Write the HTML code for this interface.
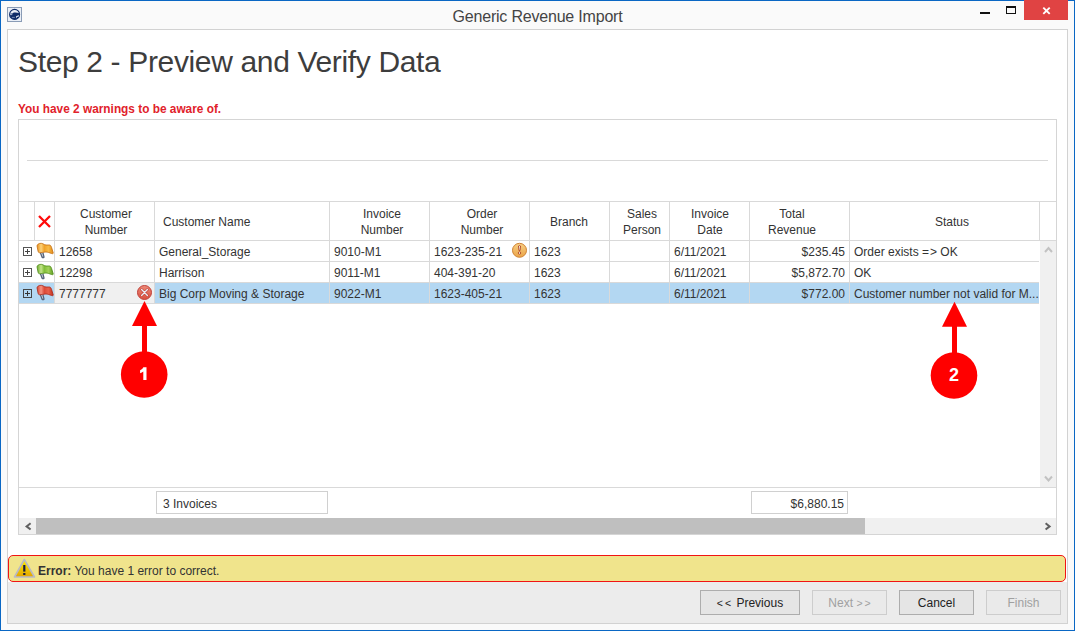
<!DOCTYPE html>
<html><head><meta charset="utf-8">
<style>
*{box-sizing:border-box;margin:0;padding:0}
html,body{width:1075px;height:631px;overflow:hidden;background:#fafafa}
body{position:relative;font-family:"Liberation Sans",sans-serif;color:#333;font-size:12px}
.a{position:absolute}
#win{left:0;top:0;width:1075px;height:631px;border:1px solid #0a67c4;background:#fafafa}
#title{left:0;top:7px;width:1075px;text-align:center;font-size:16px;letter-spacing:-0.2px;color:#444;line-height:20px}
#close{left:1024px;top:0;width:44px;height:20px;background:#e04343}
#panel{left:7px;top:29px;width:1061px;height:595px;border:1px solid #d2d2d2;background:#fff}
#graybot{left:8px;top:582px;width:1059px;height:41px;background:#ececec}
#h1{left:18px;top:44px;font-size:30px;letter-spacing:-0.35px;line-height:36px;color:#3d3d3d;white-space:nowrap}
#warn{left:18px;top:101px;font-size:11.85px;font-weight:700;color:#e1222b;line-height:16px;white-space:nowrap}
#grid{left:18px;top:119px;width:1039px;height:416px;border:1px solid #d5d5d5;background:#fff}
.hl{height:1px;background:#d9d9d9}
.vl{width:1px;background:#d9d9d9}
.hd{text-align:center;line-height:15.5px;white-space:nowrap}
.c{white-space:nowrap;line-height:20px}
.tb{border:1px solid #d0d0d0;background:#fff;height:23px;line-height:21px}
.btn{top:590px;height:25px;border:1px solid #adadad;background:#e5e5e5;text-align:center;line-height:23px;padding-top:1px;color:#222}
.btn.dis{border-color:#cdcdcd;background:#eaeaea;color:#a0a0a0}
</style></head><body>
<div id="win" class="a"></div>
<!-- app icon -->
<svg class="a" style="left:7px;top:7px" width="15" height="15" viewBox="0 0 15 15"><rect x="0.5" y="0.5" width="14" height="14" fill="#e9eef6" stroke="#8a9cb6" stroke-width="1"/><circle cx="7.6" cy="7.4" r="5" fill="none" stroke="#0e2b68" stroke-width="1.1"/><path d="M2.7 7.6 Q3.8 6.1 5.4 6.6 L6.8 5.6 Q9.6 5.2 12.4 6.3 L12.3 8 Q10 8.6 9 9.6 Q8.5 11 10 11.3 L9.6 12.2 Q8.6 12.5 7.6 12.5 Q3.4 12.3 2.7 7.6 Z" fill="#0e2b68"/><rect x="3" y="7.2" width="2.3" height="0.9" fill="#b9c6de"/><path d="M4.9 10.4 H7.8" stroke="#8fa2c6" stroke-width="0.8"/><circle cx="10.4" cy="10.6" r="0.8" fill="#0e2b68"/></svg>
<div id="title" class="a">Generic Revenue Import</div>
<!-- min / max / close -->
<div class="a" style="left:980px;top:12px;width:10px;height:2px;background:#111"></div>
<div class="a" style="left:1006px;top:6px;width:10px;height:8px;border:1px solid #111;border-top-width:2px"></div>
<div id="close" class="a"></div>
<svg class="a" style="left:1042px;top:6px" width="9" height="9" viewBox="0 0 9 9"><path d="M1.3 1.6 L7.7 7.9 M7.7 1.6 L1.3 7.9" stroke="#fff" stroke-width="1.9"/></svg>

<div id="panel" class="a"></div>
<div id="graybot" class="a"></div>

<div id="h1" class="a">Step 2 - Preview and Verify Data</div>
<div id="warn" class="a">You have 2 warnings to be aware of.</div>

<div id="grid" class="a"></div>

<!-- grid lines -->
<div class="a" style="left:19px;top:283px;width:1020px;height:20px;background:#b3d7f2"></div>
<div class="a" style="left:55px;top:283px;width:99px;height:20px;background:#f0f0f0"></div>
<div class="a hl" style="left:27px;top:160px;width:1021px"></div>
<div class="a hl" style="left:19px;top:201px;width:1037px"></div>
<div class="a hl" style="left:19px;top:240px;width:1037px"></div>
<div class="a vl" style="left:34px;top:202px;height:38px"></div>
<div class="a vl" style="left:54px;top:202px;height:101px"></div>
<div class="a vl" style="left:154px;top:202px;height:101px"></div>
<div class="a vl" style="left:329px;top:202px;height:101px"></div>
<div class="a vl" style="left:429px;top:202px;height:101px"></div>
<div class="a vl" style="left:529px;top:202px;height:101px"></div>
<div class="a vl" style="left:609px;top:202px;height:101px"></div>
<div class="a vl" style="left:669px;top:202px;height:101px"></div>
<div class="a vl" style="left:749px;top:202px;height:101px"></div>
<div class="a vl" style="left:849px;top:202px;height:101px"></div>
<div class="a vl" style="left:1039px;top:202px;height:38px"></div>
<div class="a hl" style="left:19px;top:261px;width:1020px"></div>
<div class="a hl" style="left:19px;top:282px;width:1020px"></div>
<div class="a hl" style="left:19px;top:303px;width:1020px"></div>
<div class="a hl" style="left:19px;top:487px;width:1037px"></div>
<!-- header text -->
<svg class="a" style="left:38px;top:215px" width="13" height="13" viewBox="0 0 13 13"><path d="M1 1 L12 12 M12 1 L1 12" stroke="#ff0a0a" stroke-width="2.3"/></svg>
<div class="a hd" style="left:46px;top:207px;width:120px">Customer<br>Number</div>
<div class="a hd" style="left:163px;top:215px;text-align:left">Customer Name</div>
<div class="a hd" style="left:322px;top:207px;width:120px">Invoice<br>Number</div>
<div class="a hd" style="left:422px;top:207px;width:120px">Order<br>Number</div>
<div class="a hd" style="left:509px;top:215px;width:120px">Branch</div>
<div class="a hd" style="left:582px;top:207px;width:120px">Sales<br>Person</div>
<div class="a hd" style="left:650px;top:207px;width:120px">Invoice<br>Date</div>
<div class="a hd" style="left:732px;top:207px;width:120px">Total<br>Revenue</div>
<div class="a hd" style="left:892px;top:215px;width:120px">Status</div>
<!-- rows -->
<div class="a c" style="left:59px;top:242px">12658</div>
<div class="a c" style="left:159px;top:242px">General_Storage</div>
<div class="a c" style="left:334px;top:242px">9010-M1</div>
<div class="a c" style="left:434px;top:242px">1623-235-21</div>
<div class="a c" style="left:534px;top:242px">1623</div>
<div class="a c" style="left:674px;top:242px">6/11/2021</div>
<div class="a c" style="left:745px;top:242px;width:100px;text-align:right">$235.45</div>
<div class="a c" style="left:854px;top:242px">Order exists <span style="letter-spacing:1px">=</span>&gt; OK</div>

<div class="a c" style="left:59px;top:263px">12298</div>
<div class="a c" style="left:159px;top:263px">Harrison</div>
<div class="a c" style="left:334px;top:263px">9011-M1</div>
<div class="a c" style="left:434px;top:263px">404-391-20</div>
<div class="a c" style="left:534px;top:263px">1623</div>
<div class="a c" style="left:674px;top:263px">6/11/2021</div>
<div class="a c" style="left:745px;top:263px;width:100px;text-align:right">$5,872.70</div>
<div class="a c" style="left:854px;top:263px">OK</div>

<div class="a c" style="left:59px;top:284px">7777777</div>
<div class="a c" style="left:159px;top:284px">Big Corp Moving &amp; Storage</div>
<div class="a c" style="left:334px;top:284px">9022-M1</div>
<div class="a c" style="left:434px;top:284px">1623-405-21</div>
<div class="a c" style="left:534px;top:284px">1623</div>
<div class="a c" style="left:674px;top:284px">6/11/2021</div>
<div class="a c" style="left:745px;top:284px;width:100px;text-align:right">$772.00</div>
<div class="a c" style="left:854px;top:284px">Customer number not valid for M...</div>
<!-- footer -->
<div class="a tb" style="left:156px;top:491px;width:172px;padding-left:6px;padding-top:2px">3 Invoices</div>
<div class="a tb" style="left:751px;top:491px;width:97px;padding-right:3px;padding-top:2px;text-align:right">$6,880.15</div>
<!-- v scrollbar -->
<div class="a" style="left:1040px;top:241px;width:16px;height:246px;background:#f0f0f0"></div>
<!-- h scrollbar -->
<div class="a" style="left:19px;top:518px;width:1037px;height:16px;background:#f0f0f0"></div>
<div class="a" style="left:36px;top:518px;width:829px;height:16px;background:#bfbfbf"></div>
<!-- error bar -->
<div class="a" style="left:8px;top:555px;width:1058px;height:27px;border:1px solid #f01414;border-radius:5px;background:#f0e48c"></div>
<div class="a" style="left:38px;top:563px;line-height:16px;white-space:nowrap;color:#333"><b>Error:</b> You have 1 error to correct.</div>
<!-- buttons -->
<div class="a btn" style="left:700px;width:100px"><span style="font-size:10.5px;letter-spacing:2px">&lt;&lt;</span> Previous</div>
<div class="a btn dis" style="left:812px;width:75px">Next <span style="font-size:10.5px;letter-spacing:2px;margin-right:-2px">&gt;&gt;</span></div>
<div class="a btn" style="left:899px;width:75px">Cancel</div>
<div class="a btn dis" style="left:986px;width:75px">Finish</div>

<!-- defs -->
<svg width="0" height="0" style="position:absolute">
<defs>
<linearGradient id="fo" x1="0" y1="0" x2="1" y2="0"><stop offset="0" stop-color="#e8901a"/><stop offset="0.25" stop-color="#fcd27a"/><stop offset="0.45" stop-color="#f0a22a"/><stop offset="0.7" stop-color="#f8bb48"/><stop offset="1" stop-color="#e08a18"/></linearGradient>
<linearGradient id="fg" x1="0" y1="0" x2="1" y2="0"><stop offset="0" stop-color="#6aa82a"/><stop offset="0.25" stop-color="#c4e48a"/><stop offset="0.45" stop-color="#80bd38"/><stop offset="0.7" stop-color="#a2d25a"/><stop offset="1" stop-color="#5e9c22"/></linearGradient>
<linearGradient id="fr" x1="0" y1="0" x2="1" y2="0"><stop offset="0" stop-color="#d8412f"/><stop offset="0.25" stop-color="#f39282"/><stop offset="0.45" stop-color="#dc4a38"/><stop offset="0.7" stop-color="#e8604c"/><stop offset="1" stop-color="#c0301e"/></linearGradient>
<linearGradient id="er" x1="0" y1="0" x2="0" y2="1"><stop offset="0" stop-color="#ec8a78"/><stop offset="1" stop-color="#d9503f"/></linearGradient>
<linearGradient id="co" x1="0" y1="0" x2="0" y2="1"><stop offset="0" stop-color="#f8cf85"/><stop offset="1" stop-color="#eaa447"/></linearGradient>
<linearGradient id="tri" x1="0" y1="0" x2="0" y2="1"><stop offset="0" stop-color="#fff000"/><stop offset="1" stop-color="#e2a400"/></linearGradient>
</defs></svg>
<!-- expand boxes + flags -->
<svg class="a" style="left:23px;top:247px" width="9" height="9" viewBox="0 0 9 9"><rect x="0.5" y="0.5" width="8" height="8" fill="none" stroke="#555" stroke-width="1"/><path d="M2 4.5 H7 M4.5 2 V7" stroke="#444" stroke-width="1"/></svg>
<svg class="a" style="left:23px;top:268px" width="9" height="9" viewBox="0 0 9 9"><rect x="0.5" y="0.5" width="8" height="8" fill="none" stroke="#555" stroke-width="1"/><path d="M2 4.5 H7 M4.5 2 V7" stroke="#444" stroke-width="1"/></svg>
<svg class="a" style="left:23px;top:289px" width="9" height="9" viewBox="0 0 9 9"><rect x="0.5" y="0.5" width="8" height="8" fill="none" stroke="#444" stroke-width="1"/><path d="M2 4.5 H7 M4.5 2 V7" stroke="#333" stroke-width="1"/></svg>
<svg class="a" style="left:34px;top:241px" width="22" height="20" viewBox="0 0 22 20"><path d="M6.3 11.5 L8 16 Q9 17.4 10 16 L8.8 11.5" fill="#d5dde8" stroke="#56637a" stroke-width="1.3"/><path d="M3 4.8 C3.3 2.6 6.8 1.6 9 2.8 C10.2 3.5 10.8 4 12 4 L15.6 4 C16.6 4.2 17.1 5 17.6 6.5 L19.2 11.8 C19.4 12.7 18.6 12.9 17.5 12.5 C15.5 11.8 13.6 11 12 11 C9.6 11 7.6 11.8 5.6 11.8 C4.6 11.8 4.3 11 4 10 Z" fill="url(#fo)" stroke="#c46d12" stroke-width="0.8"/></svg>
<svg class="a" style="left:34px;top:262px" width="22" height="20" viewBox="0 0 22 20"><path d="M6.3 11.5 L8 16 Q9 17.4 10 16 L8.8 11.5" fill="#d5dde8" stroke="#56637a" stroke-width="1.3"/><path d="M3 4.8 C3.3 2.6 6.8 1.6 9 2.8 C10.2 3.5 10.8 4 12 4 L15.6 4 C16.6 4.2 17.1 5 17.6 6.5 L19.2 11.8 C19.4 12.7 18.6 12.9 17.5 12.5 C15.5 11.8 13.6 11 12 11 C9.6 11 7.6 11.8 5.6 11.8 C4.6 11.8 4.3 11 4 10 Z" fill="url(#fg)" stroke="#4f8a1a" stroke-width="0.8"/></svg>
<svg class="a" style="left:34px;top:283px" width="22" height="20" viewBox="0 0 22 20"><path d="M6.3 11.5 L8 16 Q9 17.4 10 16 L8.8 11.5" fill="#d5dde8" stroke="#56637a" stroke-width="1.3"/><path d="M3 4.8 C3.3 2.6 6.8 1.6 9 2.8 C10.2 3.5 10.8 4 12 4 L15.6 4 C16.6 4.2 17.1 5 17.6 6.5 L19.2 11.8 C19.4 12.7 18.6 12.9 17.5 12.5 C15.5 11.8 13.6 11 12 11 C9.6 11 7.6 11.8 5.6 11.8 C4.6 11.8 4.3 11 4 10 Z" fill="url(#fr)" stroke="#a82a1c" stroke-width="0.8"/></svg>
<!-- error icon in cell -->
<svg class="a" style="left:136px;top:284px" width="17" height="17" viewBox="0 0 17 17"><circle cx="8.5" cy="8.5" r="7" fill="url(#er)" stroke="#c0403a" stroke-width="1"/><path d="M5.6 5.6 L11.4 11.4 M11.4 5.6 L5.6 11.4" stroke="#bb3a33" stroke-width="2.6" stroke-linecap="round"/><path d="M5.6 5.6 L11.4 11.4 M11.4 5.6 L5.6 11.4" stroke="#ececf2" stroke-width="1.4" stroke-linecap="round"/></svg>
<!-- warning coin -->
<svg class="a" style="left:511px;top:242px" width="17" height="17" viewBox="0 0 17 17"><circle cx="8.5" cy="8.3" r="7" fill="url(#co)" stroke="#d08436" stroke-width="1"/><path d="M7.5 4 Q8.5 3.2 9.5 4 L9 8.6 L8 8.6 Z" fill="#fff" stroke="#b34d28" stroke-width="1"/><circle cx="8.5" cy="11" r="1.2" fill="#fff" stroke="#b34d28" stroke-width="1"/></svg>
<!-- triangle -->
<svg class="a" style="left:13px;top:558px" width="23" height="21" viewBox="0 0 23 21"><path d="M11.3 1.5 L21.5 19 L1.5 19 Z" fill="url(#tri)" stroke="#b9b9c4" stroke-width="1.6" stroke-linejoin="round"/><path d="M11.3 7 V13.6" stroke="#1b1f3b" stroke-width="2.2"/><rect x="10.2" y="15" width="2.2" height="2" fill="#1b1f3b"/></svg>
<!-- scroll chevrons -->
<svg class="a" style="left:1043px;top:245px" width="11" height="9" viewBox="0 0 11 9"><path d="M2 7 L5.5 3 L9 7" fill="none" stroke="#c2c2c2" stroke-width="2"/></svg>
<svg class="a" style="left:1043px;top:474px" width="11" height="9" viewBox="0 0 11 9"><path d="M2 2.5 L5.5 6.5 L9 2.5" fill="none" stroke="#c2c2c2" stroke-width="2"/></svg>
<svg class="a" style="left:22px;top:521px" width="11" height="11" viewBox="0 0 11 11"><path d="M8.6 2.3 L4.6 5.4 L8.6 8.5" fill="none" stroke="#606060" stroke-width="2"/></svg>
<svg class="a" style="left:1043px;top:521px" width="11" height="11" viewBox="0 0 11 11"><path d="M2.6 2.3 L6.6 5.4 L2.6 8.5" fill="none" stroke="#606060" stroke-width="2"/></svg>
<!-- annotations -->
<svg class="a" style="left:110px;top:295px" width="70" height="110" viewBox="0 0 70 110"><path d="M34.5 6 L47 31 L22 31 Z" fill="#ff0000"/><rect x="32" y="30" width="5" height="30" fill="#ff0000"/><circle cx="34.2" cy="79.5" r="23.3" fill="#ff0000"/><path d="M33.4 72.2 H36.5 V85 H33.3 V76.6 Q31.9 77.7 30.1 78.2 V75.3 Q32.6 74.3 33.4 72.2 Z" fill="#fff"/></svg>

<svg class="a" style="left:920px;top:295px" width="70" height="110" viewBox="0 0 70 110"><path d="M34.5 6.8 L47 31.8 L22 31.8 Z" fill="#ff0000"/><rect x="32" y="31" width="5" height="30" fill="#ff0000"/><circle cx="34" cy="80.5" r="23.3" fill="#ff0000"/></svg>
<div class="a" style="left:924px;top:365px;width:60px;text-align:center;color:#fff;font-weight:700;font-size:18px;line-height:20px">2</div>
</body></html>
